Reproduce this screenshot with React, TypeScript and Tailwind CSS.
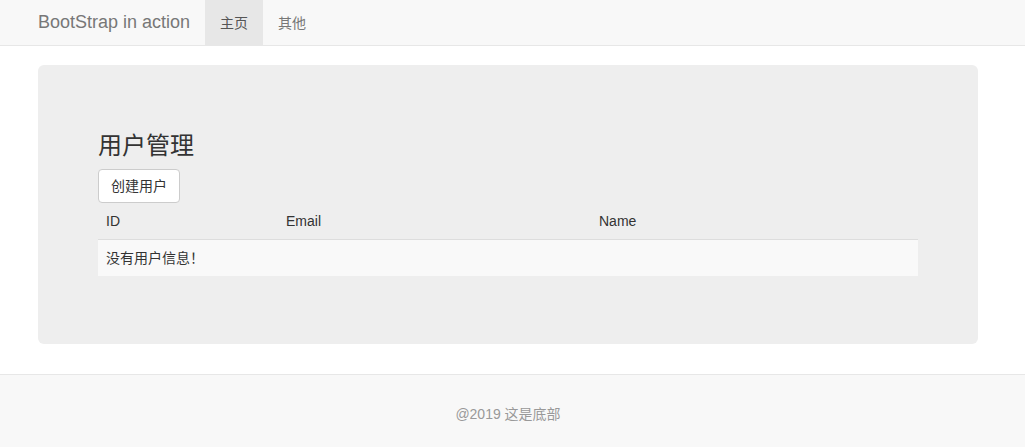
const font = {
  fontFamily:
    '"Liberation Sans", Arial, "Noto Sans CJK SC", sans-serif',
};

const App = () => {
  return (
    <div className="min-h-[447px] bg-white text-sm text-[#333]" style={font}>
      <nav className="h-[46px] border-b border-[#e7e7e7] bg-[#f8f8f8]">
        <div className="ml-[23px] flex h-[45px] items-stretch">
          <a className="flex items-center px-[15px] text-[18px] text-[#777]">
            BootStrap in action
          </a>
          <a className="flex items-center bg-[#e7e7e7] px-[15px] text-[#555]">
            主页
          </a>
          <a className="flex items-center px-[15px] text-[#777]">其他</a>
        </div>
      </nav>

      <main className="ml-[38px] mt-[19px] w-[940px] rounded-md bg-[#eeeeee] px-[60px] pb-[48px] pt-[48px]">
        <h3 className="mt-[20px] mb-[10px] text-[24px] leading-[26px] font-normal text-[#333]">
          用户管理
        </h3>
        <button
          type="button"
          className="h-[34px] rounded border border-[#ccc] bg-white px-3 text-sm text-[#333]"
        >
          创建用户
        </button>
        <table className="mb-5 w-full border-collapse text-left">
          <thead>
            <tr className="border-b border-[#ddd]">
              <th className="w-[180px] px-2 py-2 leading-5 font-normal">ID</th>
              <th className="w-[313px] px-2 py-2 leading-5 font-normal">Email</th>
              <th className="px-2 py-2 leading-5 font-normal">Name</th>
            </tr>
          </thead>
          <tbody>
            <tr className="bg-[#f9f9f9]">
              <td colSpan={3} className="px-2 py-2 leading-5">
                没有用户信息！
              </td>
            </tr>
          </tbody>
        </table>
      </main>

      <footer className="mt-[30px] h-[73px] border-t border-[#e7e7e7] bg-[#f8f8f8] pr-[9px] pt-[29px] text-center text-[#999]">
        @2019 这是底部
      </footer>
    </div>
  );
};

export default App;
